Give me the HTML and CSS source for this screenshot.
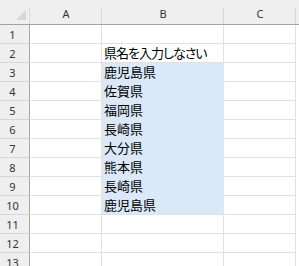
FILE: index.html
```html
<!DOCTYPE html>
<html>

<head>
  <meta charset="UTF-8">
  <meta name="viewport" content="width=device-width, initial-scale=1.0">
  <link rel="stylesheet" href="styles.css">
</head>

<body>
  <div class="sheet">
    <!-- cabecera de columnas -->
    <div class="corner">
      <svg width="12" height="12" viewBox="0 0 12 12"><polygon points="1,11 11,11 11,1" fill="#d6d6d6" /></svg>
    </div>
    <div class="col-head">A</div>
    <div class="col-head">B</div>
    <div class="col-head">C</div>
    <div class="col-head filler"></div>

    <div class="row-head">1</div>
    <div class="cell"></div><div class="cell"></div><div class="cell"></div><div class="blank"></div>

    <div class="row-head">2</div>
    <div class="cell"></div><div class="cell text prompt">県名を入力しなさい</div><div class="cell"></div><div class="blank"></div>

    <div class="row-head">3</div>
    <div class="cell"></div><div class="cell text sel">鹿児島県</div><div class="cell"></div><div class="blank"></div>

    <div class="row-head">4</div>
    <div class="cell"></div><div class="cell text sel">佐賀県</div><div class="cell"></div><div class="blank"></div>

    <div class="row-head">5</div>
    <div class="cell"></div><div class="cell text sel">福岡県</div><div class="cell"></div><div class="blank"></div>

    <div class="row-head">6</div>
    <div class="cell"></div><div class="cell text sel">長崎県</div><div class="cell"></div><div class="blank"></div>

    <div class="row-head">7</div>
    <div class="cell"></div><div class="cell text sel">大分県</div><div class="cell"></div><div class="blank"></div>

    <div class="row-head">8</div>
    <div class="cell"></div><div class="cell text sel">熊本県</div><div class="cell"></div><div class="blank"></div>

    <div class="row-head">9</div>
    <div class="cell"></div><div class="cell text sel">長崎県</div><div class="cell"></div><div class="blank"></div>

    <div class="row-head">10</div>
    <div class="cell"></div><div class="cell text sel last">鹿児島県</div><div class="cell"></div><div class="blank"></div>

    <div class="row-head">11</div>
    <div class="cell"></div><div class="cell"></div><div class="cell"></div><div class="blank"></div>

    <div class="row-head">12</div>
    <div class="cell"></div><div class="cell"></div><div class="cell"></div><div class="blank"></div>

    <div class="row-head">13</div>
    <div class="cell"></div><div class="cell"></div><div class="cell"></div><div class="blank"></div>
  </div>
</body>

</html>
```

FILE: styles.css
```css
/* Hoja de cálculo */
html,
body {
  margin: 0;
  background: #ffffff;
}

body {
  width: 299px;
  height: 266px;
  overflow: hidden;
}

.sheet {
  display: grid;
  grid-template-columns: 30px 72px 122px 72px 1fr;
  grid-template-rows: 25px;
  grid-auto-rows: 19px;
  font-family: "Noto Sans", "DejaVu Sans", sans-serif;
}

.sheet > div {
  box-sizing: border-box;
}

/* Cabeceras */
.corner,
.col-head {
  background: linear-gradient(#d8d8d8, #d8d8d8) right bottom / 1px 16px no-repeat, #efefef;
  border-bottom: 1px solid #a3a3a3;
}

.corner {
  display: flex;
  align-items: flex-end;
  justify-content: flex-end;
  padding: 0 3px 3px 0;
}

.col-head {
  display: flex;
  align-items: flex-end;
  justify-content: center;
  font-size: 11px;
  line-height: 18px;
  color: #333333;
  padding-bottom: 1px;
}

.col-head.filler {
  background: #efefef;
}

.row-head {
  background: #efefef;
  border-right: 1px solid #a8a8a8;
  border-bottom: 1px solid #d6d6d6;
  display: flex;
  align-items: center;
  justify-content: center;
  padding-right: 4px;
  font-size: 11px;
  color: #333333;
}

/* Celdas */
.cell {
  border-right: 1px solid #e1e1e1;
  border-bottom: 1px solid #e1e1e1;
}

.text {
  font-family: "Noto Sans CJK JP", "Noto Sans", sans-serif;
  font-feature-settings: "palt";
  font-size: 13px;
  line-height: 18px;
  color: #000000;
  padding-left: 2px;
  white-space: nowrap;
}

.prompt {
  letter-spacing: -1px;
}

.sel {
  background: #dae8f7;
  border-right-color: #dae8f7;
  border-bottom-color: #dae8f7;
}

.sel.last {
  border-bottom-color: #e1e1e1;
}

.blank {
  background: #ffffff;
}
```
